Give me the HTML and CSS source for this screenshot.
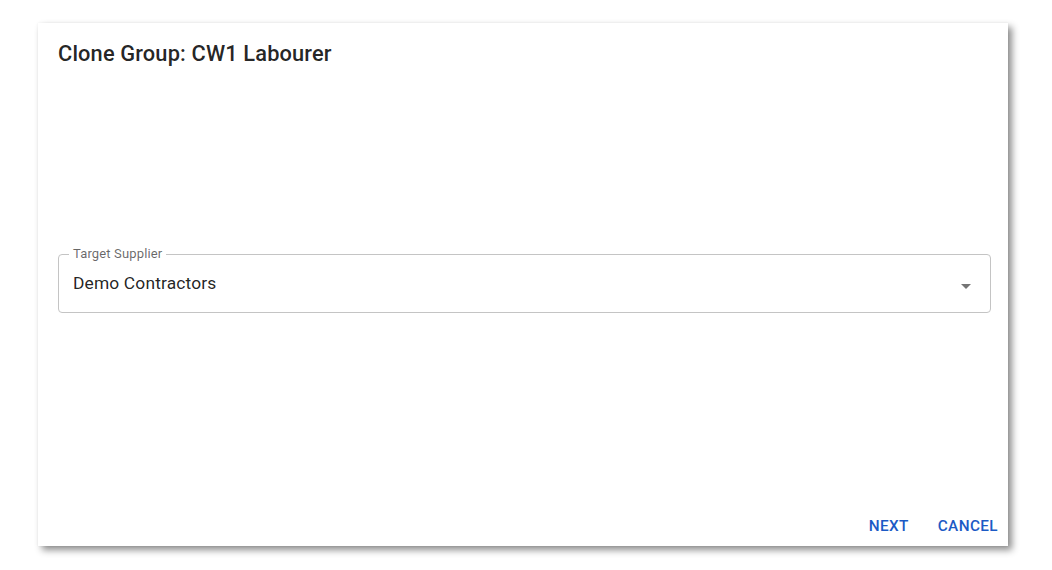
FILE: index.html
```html
<!DOCTYPE html>
<html lang="en">
<head>
  <meta charset="UTF-8">
  <title>Clone Group</title>
  <link rel="stylesheet" href="styles.css">
</head>
<body>
  <div class="dialog">
    <h2 class="dialog-title">Clone Group: CW1 Labourer</h2>

    <div class="dialog-body">
      <div class="field">
        <span class="field-label">Target Supplier</span>
        <span class="field-value">Demo Contractors</span>
        <svg class="field-arrow" viewBox="0 0 24 24" width="24" height="24"><path d="M7 10l5 5 5-5z"></path></svg>
      </div>
    </div>

    <div class="dialog-actions">
      <button class="btn">Next</button>
      <button class="btn">Cancel</button>
    </div>
  </div>
</body>
</html>
```

FILE: styles.css
```css
body { margin: 0; padding: 23px 0 0 38px; min-height: 570px; box-sizing: border-box; background: #fff; font-family: Roboto, "Liberation Sans", sans-serif; color: rgba(0,0,0,0.87); }
.dialog { width: 970px; height: 523px; background: #fff; display: flex; flex-direction: column; box-shadow: 4px 4px 7px rgba(0,0,0,0.45), 0 0 2px rgba(0,0,0,0.06); }
.dialog-title { margin: 0; padding: 15px 20px 0; font-size: 21.8px; font-weight: 500; line-height: 32px; letter-spacing: 0.15px; }
.dialog-body { flex: 1; padding: 0 17px 0 20px; }
.field { position: relative; margin-top: 184px; height: 57px; border: 1px solid #c4c4c4; border-radius: 4px; display: flex; align-items: center; padding: 0 12px 0 14px; }
.field-label { position: absolute; top: -9px; left: 10px; padding: 0 4px; background: #fff; font-size: 13px; line-height: 16px; color: rgba(0,0,0,0.6); letter-spacing: 0.15px; }
.field-value { flex: 1; font-size: 17.4px; line-height: 24px; letter-spacing: 0.15px; margin-top: -2px; }
.field-arrow { fill: rgba(0,0,0,0.54); margin-top: 4px; margin-right: 0; }
.dialog-actions { display: flex; justify-content: flex-end; gap: 9px; padding: 0 2px 2px 0; }
.btn { border: 0; background: none; padding: 6px 8px; min-width: 64px; font-family: inherit; font-size: 15.3px; font-weight: 500; line-height: 24.5px; letter-spacing: 0.4px; text-transform: uppercase; color: #1c5ac5; cursor: pointer; }
```
